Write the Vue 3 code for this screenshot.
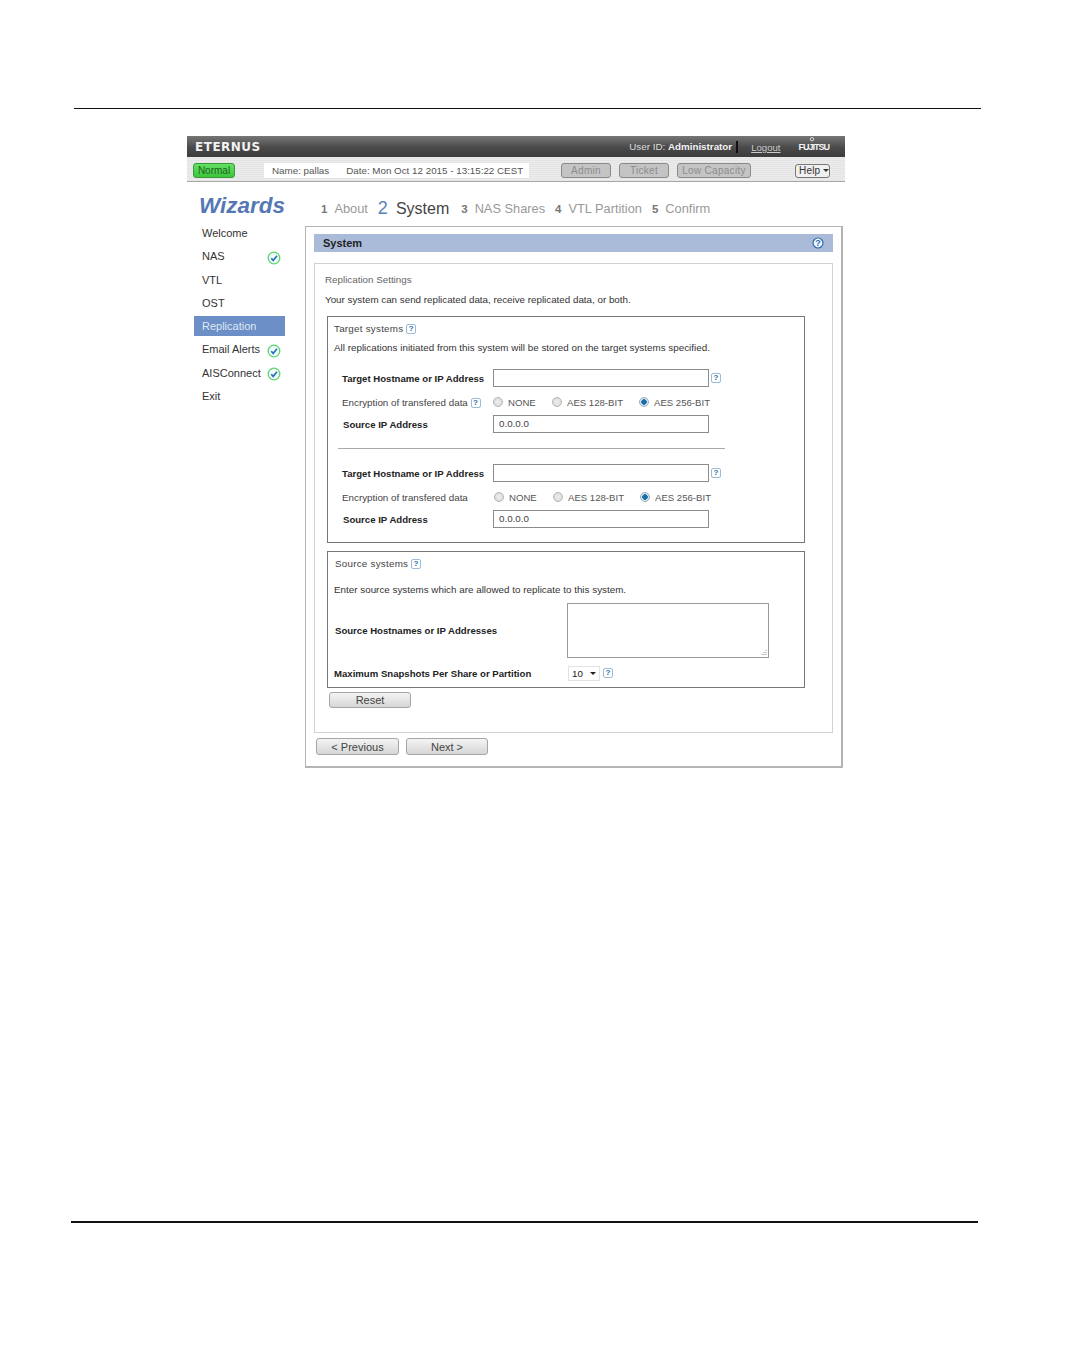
<script setup>
const nav = [
  { label: 'Welcome' },
  { label: 'NAS', done: true, far: true },
  { label: 'VTL' },
  { label: 'OST' },
  { label: 'Replication', active: true },
  { label: 'Email Alerts', done: true },
  { label: 'AISConnect', done: true },
  { label: 'Exit' }
]
const steps = [
  { n: '1', label: 'About' },
  { n: '2', label: 'System', active: true },
  { n: '3', label: 'NAS Shares' },
  { n: '4', label: 'VTL Partition' },
  { n: '5', label: 'Confirm' }
]
const opts = ['NONE', 'AES 128-BIT', 'AES 256-BIT']
const targets = [{ help: true }, { help: false }]
</script>

<template>
  <div class="page">
    <div class="rule top-rule"></div>
    <div class="app">
      <header class="head">
        <div class="brand">ETERNUS</div>
        <div class="user">User ID: <b>Administrator</b></div>
        <a class="logout">Logout</a>
        <div class="fujitsu">FUJITSU
          <svg class="fuji-mark" viewBox="0 0 6 8" width="6" height="8">
            <circle cx="3" cy="2.2" r="1.7" fill="none" stroke="#f0f0f0" stroke-width=".8" />
          </svg>
        </div>
      </header>
      <div class="toolbar">
        <span class="status">Normal</span>
        <div class="info"><span>Name: pallas</span><span>Date: Mon Oct 12 2015 - 13:15:22 CEST</span></div>
        <div class="tools">
          <span class="tool t1">Admin</span>
          <span class="tool t2">Ticket</span>
          <span class="tool t3">Low Capacity</span>
        </div>
        <span class="help-btn">Help <i class="caret"></i></span>
      </div>
      <div class="body">
        <aside class="side">
          <div class="title">Wizards</div>
          <ul class="nav">
            <li v-for="n in nav" :key="n.label" :class="{ active: n.active }">
              <span class="nav-label" :class="{ far: n.far }">{{ n.label }}</span>
              <svg v-if="n.done" class="check" viewBox="0 0 14 14" width="14" height="14">
                <circle cx="7" cy="7" r="5.8" fill="#f4fbff" stroke="#58d668" stroke-width="1.3" />
                <path d="M4.2 7.2 6.2 9.4 10 4.8" fill="none" stroke="#2a72b8" stroke-width="1.7" />
              </svg>
            </li>
          </ul>
        </aside>
        <main class="main">
          <nav class="steps">
            <span v-for="s in steps" :key="s.n" class="step" :class="{ on: s.active }"><b>{{ s.n }}</b><span>{{ s.label }}</span></span>
          </nav>
          <section class="panel">
            <div class="bar">
              <span>System</span>
              <svg class="q-round" viewBox="0 0 12 12" width="12" height="12">
                <circle cx="6" cy="6" r="5" fill="#eef4fb" stroke="#2d6cad" stroke-width="1.2" />
                <text x="6" y="9" text-anchor="middle" class="q-text">?</text>
              </svg>
            </div>
            <div class="box">
              <div class="settings">Replication Settings</div>
              <div class="intro">Your system can send replicated data, receive replicated data, or both.</div>
              <div class="field f-target">
                <div class="legend">Target systems <i class="q">?</i></div>
                <div class="note">All replications initiated from this system will be stored on the target systems specified.</div>
                <template v-for="(t, i) in targets" :key="i">
                  <div class="form-row r-host">
                    <label class="bold">Target Hostname or IP Address</label>
                    <span class="input"></span>
                    <i class="q q-after">?</i>
                  </div>
                  <div class="form-row r-enc">
                    <label>Encryption of transfered data <i v-if="t.help" class="q">?</i></label>
                    <div class="radios" :class="{ nudge: !t.help }">
                      <span v-for="(o, k) in opts" :key="o" class="radio-item">
                        <i class="radio" :class="{ sel: k === 2 }"></i>{{ o }}
                      </span>
                    </div>
                  </div>
                  <div class="form-row r-src">
                    <label class="bold src">Source IP Address</label>
                    <span class="input">0.0.0.0</span>
                  </div>
                  <hr v-if="i === 0" class="sep" />
                </template>
              </div>
              <div class="field f-source">
                <div class="legend l2">Source systems <i class="q">?</i></div>
                <div class="note n2">Enter source systems which are allowed to replicate to this system.</div>
                <div class="src-row">
                  <label class="bold">Source Hostnames or IP Addresses</label>
                  <span class="textarea">
                    <svg class="grip" viewBox="0 0 7 7" width="7" height="7">
                      <path d="M6 1v1M4 3v1M6 3v1M2 5v1M4 5v1M6 5v1" stroke="#999" stroke-width="1" />
                    </svg>
                  </span>
                </div>
                <div class="max-row">
                  <label class="bold">Maximum Snapshots Per Share or Partition</label>
                  <span class="select">10<i class="caret dark"></i></span>
                  <i class="q">?</i>
                </div>
              </div>
              <button class="btn reset" type="button">Reset</button>
            </div>
            <div class="actions">
              <button class="btn prev" type="button">&lt; Previous</button>
              <button class="btn next" type="button">Next &gt;</button>
            </div>
          </section>
        </main>
      </div>
    </div>
    <div class="rule bottom-rule"></div>
  </div>
</template>

<style>
html, body { margin: 0; background: #fff; }
</style>

<style scoped>
.page {
  width: 1077px;
  height: 1361px;
  overflow: hidden;
  box-sizing: border-box;
  padding-top: 108px;
  font-family: "Liberation Sans", Arial, sans-serif;
  font-size: 9.8px;
  color: #333;
  background: #fff;
}
.rule { background: #111; }
.top-rule { height: 1px; width: 907px; margin-left: 74px; }
.bottom-rule { height: 2px; width: 907px; margin: 453px 0 0 71px; }
.app { width: 658px; margin: 27px 0 0 187px; }

.head {
  height: 21px;
  box-sizing: border-box;
  padding-top: 1px;
  display: flex;
  align-items: center;
  background: linear-gradient(#767676, #4a4a4a 55%, #3c3c3c);
  color: #eee;
}
.brand {
  margin-left: 8px;
  font-family: "DejaVu Sans", sans-serif;
  font-weight: 700;
  font-size: 12px;
  letter-spacing: .5px;
  color: #f2f2f2;
}
.user { margin-left: auto; font-size: 9.8px; color: #ddd; padding-right: 4px; border-right: 2px solid #111; line-height: 12px; white-space: nowrap; }
.user b { color: #f4f4f4; }
.logout { margin-left: 13px; text-decoration: underline; color: #ccc; font-size: 9.6px; }
.fujitsu { position: relative; margin: 0 16px 0 18px; font-weight: 700; font-size: 9px; letter-spacing: -1px; color: #f4f4f4; white-space: nowrap; }
.fuji-mark { position: absolute; left: 11px; top: -5px; }

.toolbar {
  height: 25px;
  box-sizing: border-box;
  padding-top: 3px;
  display: flex;
  align-items: center;
  background: repeating-linear-gradient(#ececec 0 1px, #e4e4e4 1px 2px);
  border-bottom: 1px solid #a8a8a8;
}
.status {
  margin-left: 6px;
  width: 42px;
  height: 15px;
  box-sizing: border-box;
  border: 1px solid #3a9a3a;
  border-radius: 3px;
  background: linear-gradient(#63e063, #3bc63b);
  color: #1f5f1f;
  text-align: center;
  line-height: 13px;
  font-size: 10px;
}
.info {
  margin-left: 29px;
  width: 265px;
  height: 15px;
  flex: none;
  background: #fff;
  display: flex;
  align-items: center;
  color: #555;
  font-size: 9.8px;
  box-sizing: border-box;
  padding-left: 8px;
  gap: 17px;
  white-space: nowrap;
}
.tools { display: flex; margin-left: 32px; gap: 8px; }
.tool {
  height: 15px;
  box-sizing: border-box;
  border: 1px solid #8a8a8a;
  border-radius: 3px;
  background: #c4c4c4;
  color: #8c8c8c;
  text-align: center;
  line-height: 13px;
  font-size: 10px;
  letter-spacing: .3px;
}
.t1 { width: 50px; }
.t2 { width: 50px; }
.t3 { width: 74px; }
.help-btn {
  margin-left: 44px;
  width: 35px;
  height: 14px;
  box-sizing: border-box;
  border: 1px solid #777;
  border-radius: 3px;
  background: #f0f0f0;
  color: #333;
  line-height: 12px;
  padding-left: 3px;
  font-size: 10px;
  letter-spacing: .2px;
  white-space: nowrap;
}
.caret {
  display: inline-block;
  width: 0;
  height: 0;
  border-left: 3px solid transparent;
  border-right: 3px solid transparent;
  border-top: 3px solid #333;
  vertical-align: middle;
}

.body { display: flex; }
.side { width: 118px; flex: none; }
.title {
  margin: 10px 0 0 12px;
  height: 27px;
  font-size: 22.5px;
  line-height: 27px;
  font-weight: 700;
  font-style: italic;
  color: #5578b4;
}
.nav { list-style: none; margin: 2.3px 0 0 7px; padding: 0; width: 91px; }
.nav li {
  height: 23.3px;
  display: flex;
  align-items: center;
  box-sizing: border-box;
  padding-left: 8px;
  font-size: 11px;
  color: #333;
  white-space: nowrap;
}
.nav li.active { background: #6b8fc6; color: #dfe8f5; height: 20px; margin: 1.6px 0 1.7px; }
.nav-label { width: 65px; flex: none; }
.check { flex: none; margin-top: 3px; }

.main { width: 538px; }
.steps {
  height: 27px;
  margin-top: 13px;
  display: flex;
  align-items: center;
  padding-left: 16px;
  gap: 10px;
  color: #999;
  font-size: 12.8px;
  white-space: nowrap;
}
.step { display: inline-flex; align-items: baseline; gap: 7px; }
.step b { color: #777; font-size: 11.5px; }
.step.on { color: #444; font-size: 16px; gap: 8px; margin-right: 2px; }
.step.on b { color: #5a7fb8; font-size: 18px; font-weight: 400; }

.panel {
  margin-top: 4px;
  height: 542px;
  box-sizing: border-box;
  border: 2px solid #b4b4b4;
  border-width: 1px 2px 2px 1px;
  padding: 7px 8px 0 8px;
}
.bar {
  height: 18px;
  background: #a9bbd8;
  display: flex;
  align-items: center;
  justify-content: space-between;
  padding: 0 9px;
  font-weight: 700;
  font-size: 11px;
  color: #222;
}
.q-text { font: 700 9px "Liberation Sans", sans-serif; fill: #2d6cad; }

.box {
  margin-top: 11px;
  height: 470px;
  box-sizing: border-box;
  border: 1px solid #d2d2d2;
  padding: 0 27px 0 10px;
}
.settings { margin-top: 10px; line-height: 12px; color: #666; }
.intro { margin-top: 8px; line-height: 12px; color: #333; }
.field { box-sizing: border-box; border: 1px solid #777; width: 478px; margin-left: 2px; }
.f-target { margin-top: 10px; height: 227px; padding: 0 0 0 6px; }
.f-source { margin-top: 8px; height: 137px; padding: 0 0 0 6px; }
.legend { margin-top: 6px; line-height: 12px; color: #444; letter-spacing: .25px; }
.note { margin-top: 7px; line-height: 12px; color: #333; letter-spacing: .02px; }
.l2 { margin-left: 1px; }
.n2 { margin-top: 14px; }
.bold { font-weight: 700; color: #222; font-size: 9.6px; }
.q {
  display: inline-block;
  width: 10px;
  height: 10px;
  box-sizing: border-box;
  border: 1px solid #9dbbd8;
  border-radius: 2px;
  font: 700 8px/8px "Liberation Sans", sans-serif;
  color: #2d6cad;
  text-align: center;
  font-style: normal;
  vertical-align: 1px;
}

.form-row { display: flex; align-items: center; padding-left: 8px; }
.form-row label { width: 151px; flex: none; white-space: nowrap; }
.r-host { height: 18px; margin-top: 15px; }
.r-enc { height: 14px; margin-top: 8px; color: #444; }
.r-src { height: 18px; margin-top: 6px; }
.src { padding-left: 1px; box-sizing: border-box; }
.input {
  width: 216px;
  height: 18px;
  box-sizing: border-box;
  border: 1px solid #8c8c8c;
  padding-left: 5px;
  line-height: 16px;
  color: #444;
  background: #fff;
}
.q-after { margin-left: 2px; }
.radios { display: flex; color: #555; white-space: nowrap; font-size: 9.6px; }
.radio-item { display: inline-flex; align-items: center; }
.radio-item:nth-child(1) { width: 59px; }
.radio-item:nth-child(2) { width: 87px; }
.nudge { margin-left: 1px; }
.radio {
  width: 10px;
  height: 10px;
  box-sizing: border-box;
  border: 1px solid #b4b4b4;
  border-radius: 50%;
  background: radial-gradient(circle, #eee, #d6d6d6);
  margin-right: 5px;
}
.radio.sel { background: radial-gradient(circle, #1b6fa8 0 2.5px, #d8e8f2 3px); border-color: #9ab; }
.sep {
  width: 387px;
  height: 0;
  border: 0;
  border-top: 1.5px solid #aaa;
  margin: 15px 0 14px 4px;
}

.src-row { display: flex; align-items: center; margin-top: 7px; height: 55px; padding-left: 1px; }
.src-row label { width: 232px; flex: none; }
.textarea {
  position: relative;
  width: 202px;
  height: 55px;
  box-sizing: border-box;
  border: 1px solid #9a9a9a;
}
.grip { position: absolute; right: 1px; bottom: 1px; }
.max-row { display: flex; align-items: center; margin-top: 7px; height: 16px; }
.max-row label { width: 234px; flex: none; }
.select {
  width: 32px;
  height: 15px;
  box-sizing: border-box;
  border: 1px solid #e2e2e2;
  padding-left: 3px;
  line-height: 13px;
  color: #222;
  display: flex;
  align-items: center;
  justify-content: space-between;
  padding-right: 3px;
  margin-right: 3px;
}
.caret.dark { border-top-color: #222; }

.btn {
  height: 16px;
  box-sizing: border-box;
  border: 1px solid #a5a5a5;
  border-radius: 3px;
  background: linear-gradient(#f4f4f4, #d6d6d6);
  font-family: "Liberation Sans", Arial, sans-serif;
  font-size: 11px;
  line-height: 14px;
  color: #444;
  padding: 0;
}
.reset { width: 82px; margin: 4px 0 0 4px; display: block; }
.actions { display: flex; gap: 7px; margin: 5px 0 0 2px; }
.prev { width: 83px; height: 17px; }
.next { width: 82px; height: 17px; }
</style>
